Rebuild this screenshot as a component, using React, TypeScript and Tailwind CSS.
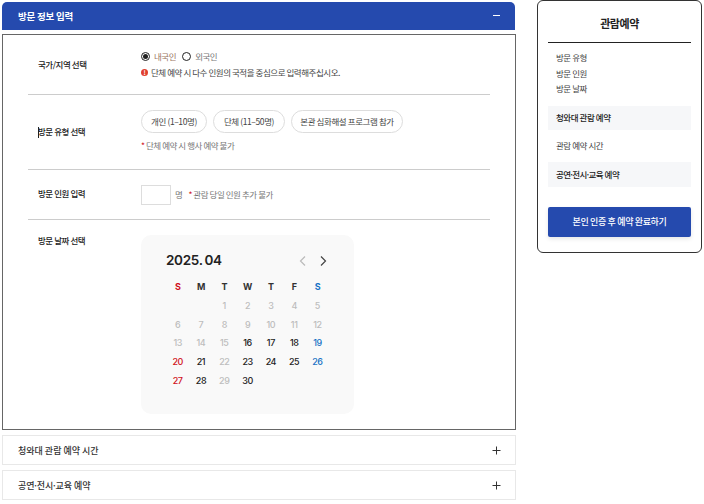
import React from 'react';

const fontKr = { fontFamily: '"Noto Sans CJK KR", "Noto Sans", sans-serif' };

const muted = [1, 2, 3, 4, 5, 6, 7, 8, 9, 10, 11, 12, 13, 14, 15, 22, 29];

const dayColor = (day: number) => {
  if (muted.includes(day)) return 'text-[#bdbdbd]';
  if (day === 20 || day === 27) return 'text-[#d0121b]';
  if (day === 19 || day === 26) return 'text-[#1a73c5]';
  return 'text-[#222222]';
};

const Dot = () => <span className="-mx-[1.5px]">·</span>;

const Calendar = () => {
  const days: (number | null)[] = [null, null];
  for (let i = 1; i <= 30; i++) days.push(i);

  return (
    <div className="w-[213px] h-[179px] rounded-[10px] bg-[#f9f9f9] pl-[25px] pt-[15px] font-['Inter',sans-serif]">
      <div className="flex items-center h-[20px] w-[163px] justify-between">
        <span className="text-[13.5px] font-semibold text-[#222222] tracking-[-0.3px] [word-spacing:-1px]">2025. 04</span>
        <div className="flex items-center gap-[8px] mt-[2px]">
          <svg width="12" height="12" viewBox="0 0 12 12" fill="none" stroke="#bbbbbb" strokeWidth="1.2"><path d="M8 1.5 3.5 6 8 10.5" /></svg>
          <svg width="12" height="12" viewBox="0 0 12 12" fill="none" stroke="#444444" strokeWidth="1.2"><path d="M4 1.5 8.5 6 4 10.5" /></svg>
        </div>
      </div>
      <div className="grid grid-cols-[repeat(7,23.3px)] mt-[8px] text-[9px] leading-[18.75px] text-center">
        {['S', 'M', 'T', 'W', 'T', 'F', 'S'].map((d, i) => (
          <div key={i} className={`font-bold h-[18.75px] ${i === 0 ? 'text-[#d0121b]' : i === 6 ? 'text-[#1a73c5]' : 'text-[#333333]'}`}>
            {d}
          </div>
        ))}
        {days.map((d, i) => (
          <div key={i} className={`h-[18.75px] font-medium ${d ? dayColor(d) : ''}`}>{d}</div>
        ))}
      </div>
    </div>
  );
};

const Accordion = ({ children }: { children: React.ReactNode }) => (
  <div className="h-[30px] border border-[#e8e8e8] flex items-center justify-between pl-[15px] pr-[15px]">
    <span className="text-[9px] tracking-[0px] text-[#333333] font-medium pt-[1px]">{children}</span>
    <svg className="-mr-[1px]" width="9" height="9" viewBox="0 0 9 9" stroke="#333333" strokeWidth="1"><path d="M4.5 0.5v8M0.5 4.5h8" /></svg>
  </div>
);

const Pill = ({ width, children }: { width: string; children: React.ReactNode }) => (
  <div className={`${width} h-[23px] flex items-center justify-center rounded-full border border-[#dddddd] text-[8.5px] tracking-[-0.4px] text-[#444444]`}>
    {children}
  </div>
);

export default function App() {
  return (
    <div className="flex w-[704px] h-[504px] bg-white overflow-hidden tracking-[-0.45px]" style={fontKr}>
      <div className="w-[514px] ml-[2px] mt-[2px] flex flex-col shrink-0">
        <div className="h-[28px] mr-[1px] rounded-t-[5px] bg-[#254aae] flex items-center justify-between pl-[16px] pr-[15px]">
          <span className="text-[9.5px] font-bold text-white tracking-[-0.2px]">방문 정보 입력</span>
          <div className="w-[7px] h-[1px] bg-white -mt-[1px]" />
        </div>

        <div className="mt-[4px] h-[396px] border border-[#666666] px-[25px]">
          <div className="h-[60px] border-b border-[#cccccc] flex">
            <div className="w-[113px] pl-[10px] pt-[22px] text-[8.5px] font-medium text-[#222222] leading-[14px]">국가/지역 선택</div>
            <div className="pt-[14px]">
              <div className="flex items-center h-[14px] text-[8.5px] text-[#777777]">
                <span className="w-[9px] h-[9px] rounded-full border border-[#222222] flex items-center justify-center mr-[4px]">
                  <span className="w-[5px] h-[5px] rounded-full bg-[#222222]" />
                </span>
                <span className="text-[#9a7561]">내국인</span>
                <span className="w-[9px] h-[9px] rounded-full border border-[#222222] ml-[6px] mr-[4px]" />
                <span>외국인</span>
              </div>
              <div className="flex items-center h-[14px] mt-[2px] text-[8.5px] text-[#444444]">
                <span className="w-[7px] h-[7px] rounded-full bg-[#e0402f] text-white text-[6px] leading-[7px] text-center font-bold mr-[3px]">!</span>
                단체 예약 시 다수 인원의 국적을 중심으로 입력해주십시오.
              </div>
            </div>
          </div>

          <div className="h-[75px] border-b border-[#cccccc] flex">
            <div className="w-[113px] pl-[10px] pt-[29px] text-[8.5px] font-medium text-[#222222] leading-[14px]">
              <span className="inline-block w-[1px] h-[11px] bg-[#222222] -mr-[1px] align-middle" />
              방문 유형 선택
            </div>
            <div className="pt-[15px]">
              <div className="flex gap-[6px]">
                <Pill width="w-[66px]">개인 (1–10명)</Pill>
                <Pill width="w-[72px]">단체 (11–50명)</Pill>
                <Pill width="w-[112px]">본관 심화해설 프로그램 참가</Pill>
              </div>
              <div className="mt-[5px] text-[8.5px] text-[#777777] leading-[14px]">
                <span className="text-[#d0121b]">* </span>단체 예약 시 행사 예약 불가
              </div>
            </div>
          </div>

          <div className="h-[50px] border-b border-[#cccccc] flex">
            <div className="w-[113px] pl-[10px] pt-[16px] text-[8.5px] font-medium text-[#222222] leading-[14px]">방문 인원 입력</div>
            <div className="pt-[15px] flex items-start">
              <div className="w-[30px] h-[20px] border border-[#dddddd]" />
              <span className="ml-[4px] mt-[2px] text-[8.5px] text-[#777777] leading-[14px]">명</span>
              <span className="ml-[6px] mt-[2px] text-[8.5px] text-[#777777] leading-[14px]">
                <span className="text-[#d0121b]">* </span>관람 당일 인원 추가 불가
              </span>
            </div>
          </div>

          <div className="flex">
            <div className="w-[113px] pl-[10px] pt-[13px] text-[8.5px] font-medium text-[#222222] leading-[14px]">방문 날짜 선택</div>
            <div className="pt-[15px]">
              <Calendar />
            </div>
          </div>
        </div>

        <div className="mt-[5px] flex flex-col gap-[5px]">
          <Accordion>청와대 관람 예약 시간</Accordion>
          <Accordion>공연<Dot />전시<Dot />교육 예약</Accordion>
        </div>
      </div>

      <div className="ml-[21px] w-[165px] h-[253px] border border-[#333333] rounded-[6px] px-[10px] shrink-0">
        <div className="h-[42px] pt-[3px] border-b border-[#222222] flex items-center justify-center text-[11px] font-bold text-[#222222]">관람예약</div>
        <div className="pl-[8px] pt-[7px] text-[8.5px] text-[#444444] leading-[15.5px]">
          <div>방문 유형</div>
          <div>방문 인원</div>
          <div>방문 날짜</div>
        </div>
        <div className="mt-[9px] h-[24px] bg-[#f6f7f9] pl-[8px] flex items-center text-[8.5px] font-medium text-[#222222]">청와대 관람 예약</div>
        <div className="h-[32px] pl-[8px] flex items-center text-[8.5px] text-[#444444]">관람 예약 시간</div>
        <div className="h-[25px] bg-[#f6f7f9] pl-[8px] flex items-center text-[8.5px] font-medium text-[#222222]"><span>공연<Dot />전시<Dot />교육 예약</span></div>
        <div className="mt-[20px] h-[30px] rounded-[2px] bg-[#254aae] flex items-center justify-center text-[9px] font-medium text-white tracking-[-0.35px] shadow-[0_2px_4px_rgba(0,0,0,0.1)]">본인 인증 후 예약 완료하기</div>
      </div>
    </div>
  );
}
